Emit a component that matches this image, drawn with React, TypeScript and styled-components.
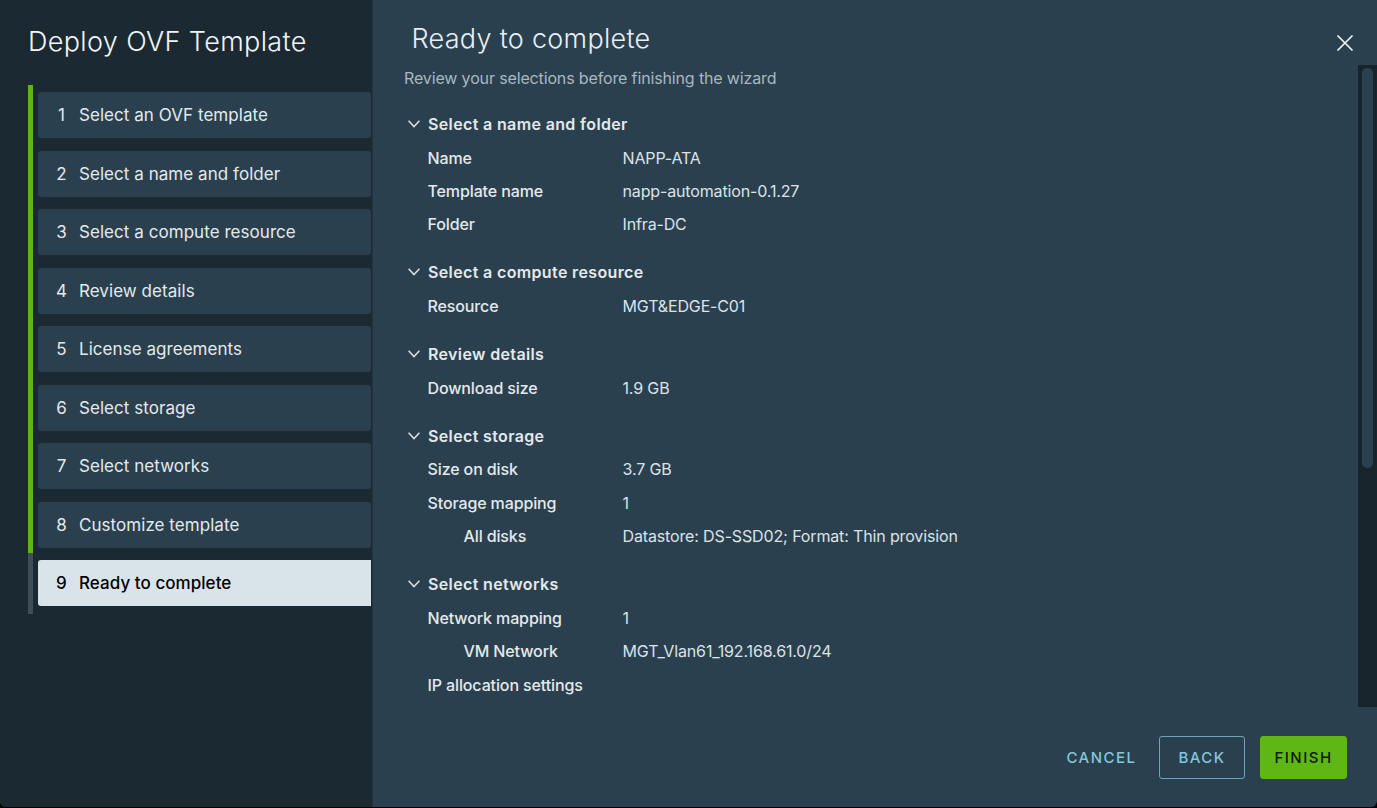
import React from "react";
import styled, { createGlobalStyle } from "styled-components";

const Global = createGlobalStyle`
  html, body { margin: 0; padding: 0; background: #000; }
  body { font-family: Inter, "Liberation Sans", sans-serif; -webkit-font-smoothing: antialiased; }
  #root { width: 1377px; height: 808px; overflow: hidden; }
`;

const Dialog = styled.div`
  width: 1377px;
  height: 807px;
  display: flex;
  background: #2a404f;
  border-radius: 0 0 6px 6px;
  overflow: hidden;
`;

const Sidebar = styled.aside`
  width: 373px;
  flex: none;
  box-sizing: border-box;
  background: #1b2a32;
  border-right: 1px solid #22343f;
  padding: 25px 1px 0 28px;
`;

const Title = styled.h1`
  margin: 0 0 33px 0;
  font-size: 27px;
  line-height: 34px;
  font-weight: 300;
  color: #f2f5f7;
  letter-spacing: 0.35px;
`;

const Steps = styled.ol`
  list-style: none;
  margin: 0;
  padding: 0 0 7.5px 0;
  display: flex;
  flex-direction: column;
  gap: 12.5px;
`;

const Step = styled.li<{ $active?: boolean }>`
  position: relative;
  margin-left: 10px;
  height: 46px;
  display: flex;
  align-items: center;
  border-radius: 3px 0 0 3px;
  border-top-right-radius: ${(p) => (p.$active ? "0" : "3px")};
  border-bottom-right-radius: ${(p) => (p.$active ? "0" : "3px")};
  background: ${(p) => (p.$active ? "#d9e4ea" : "#2a404f")};
  color: ${(p) => (p.$active ? "#000" : "#e4e9ec")};
  font-size: 17px;
  letter-spacing: 0.05px;
  font-weight: ${(p) => (p.$active ? 500 : 400)};
  &::before {
    content: "";
    position: absolute;
    left: -10px;
    top: -7px;
    bottom: ${(p) => (p.$active ? "-8px" : "-5.5px")};
    width: 5px;
    background: ${(p) => (p.$active ? "#3f4e57" : "#5eb715")};
  }
`;

const StepNumber = styled.span`
  width: 41px;
  flex: none;
  padding-left: 6px;
  box-sizing: border-box;
  text-align: center;
`;

const Main = styled.main`
  flex: 1;
  min-width: 0;
  display: flex;
  flex-direction: column;
`;

const Header = styled.header`
  height: 65px;
  flex: none;
  display: flex;
  align-items: flex-start;
  justify-content: space-between;
  padding: 21px 22px 0 38.5px;
  box-sizing: border-box;
`;

const Heading = styled.h2`
  margin: 0;
  font-size: 27px;
  line-height: 36px;
  font-weight: 300;
  letter-spacing: 0.28px;
  color: #e9eef1;
`;

const Close = styled.button`
  border: 0;
  background: none;
  padding: 0;
  margin-top: 12px;
  width: 20px;
  height: 20px;
  display: block;
  color: #f0f4f6;
`;

const Middle = styled.div`
  flex: 1;
  min-height: 0;
  display: flex;
`;

const Content = styled.div`
  flex: 1;
  min-width: 0;
  padding: 0 0 0 31px;
`;

const Lead = styled.p`
  margin: 0 0 23px;
  font-size: 16px;
  line-height: 26px;
  letter-spacing: -0.14px;
  color: #a9b8c0;
`;

const Section = styled.section`
  margin-bottom: 21.25px;
`;

const SectionHead = styled.div`
  display: flex;
  align-items: center;
  height: 20px;
  margin-bottom: 7px;
  font-size: 16px;
  font-weight: 600;
  color: #e4e9ec;
  letter-spacing: 0.36px;
`;

const Chevron = styled.svg`
  width: 12px;
  height: 8px;
  margin: 0 8px 0 4px;
  flex: none;
  color: #d5dde2;
`;

const Row = styled.div`
  display: flex;
  height: 33.4px;
  align-items: center;
  font-size: 16px;
  padding-left: 23.5px;
  color: #e4e9ec;
`;

const Label = styled.span<{ $indent?: boolean }>`
  width: 195px;
  flex: none;
  box-sizing: border-box;
  padding-left: ${(p) => (p.$indent ? "36px" : "0")};
  font-weight: 500;
  letter-spacing: -0.12px;
`;

const Value = styled.span`
  color: #dce3e7;
  letter-spacing: -0.14px;
`;

const Track = styled.div`
  width: 19px;
  flex: none;
  height: 642px;
  background: #17242c;
  padding: 3px 4px 0 4px;
  box-sizing: border-box;
`;

const Thumb = styled.div`
  height: 400px;
  border-radius: 5px;
  background: #2a404f;
`;

const Footer = styled.footer`
  height: 100px;
  flex: none;
  display: flex;
  justify-content: flex-end;
  align-items: flex-start;
  padding: 29px 30px 0 0;
  box-sizing: border-box;
  gap: 15px;
`;

const Button = styled.button<{ $kind: "link" | "outline" | "solid" }>`
  height: 43px;
  box-sizing: border-box;
  border-radius: 3px;
  font-family: inherit;
  font-size: 15px;
  font-weight: 500;
  letter-spacing: 1.5px;
  padding: 0;
  width: ${(p) => (p.$kind === "link" ? "79px" : p.$kind === "outline" ? "86px" : "87px")};
  margin-right: ${(p) => (p.$kind === "link" ? "3px" : "0")};
  color: ${(p) => (p.$kind === "solid" ? "#0d1a0a" : "#84c8de")};
  background: ${(p) => (p.$kind === "solid" ? "#5eb715" : "transparent")};
  border: ${(p) =>
    p.$kind === "outline" ? "1.5px solid #6ba6bc" : p.$kind === "solid" ? "1px solid #5eb715" : "0"};
`;

const steps = [
  "Select an OVF template",
  "Select a name and folder",
  "Select a compute resource",
  "Review details",
  "License agreements",
  "Select storage",
  "Select networks",
  "Customize template",
  "Ready to complete",
];

const sections: { title: string; rows: [string, string, boolean?][] }[] = [
  {
    title: "Select a name and folder",
    rows: [
      ["Name", "NAPP-ATA"],
      ["Template name", "napp-automation-0.1.27"],
      ["Folder", "Infra-DC"],
    ],
  },
  { title: "Select a compute resource", rows: [["Resource", "MGT&EDGE-C01"]] },
  { title: "Review details", rows: [["Download size", "1.9 GB"]] },
  {
    title: "Select storage",
    rows: [
      ["Size on disk", "3.7 GB"],
      ["Storage mapping", "1"],
      ["All disks", "Datastore: DS-SSD02; Format: Thin provision", true],
    ],
  },
  {
    title: "Select networks",
    rows: [
      ["Network mapping", "1"],
      ["VM Network", "MGT_Vlan61_192.168.61.0/24", true],
      ["IP allocation settings", ""],
    ],
  },
];

export default function App() {
  return (
    <Dialog>
      <Global />
      <Sidebar>
        <Title>Deploy OVF Template</Title>
        <Steps>
          {steps.map((s, i) => (
            <Step key={s} $active={i === 8}>
              <StepNumber>{i + 1}</StepNumber>
              {s}
            </Step>
          ))}
        </Steps>
      </Sidebar>
      <Main>
        <Header>
          <Heading>Ready to complete</Heading>
          <Close aria-label="Close">
            <svg viewBox="0 0 20 20" width="20" height="20" fill="none" stroke="currentColor" strokeWidth="1.7">
              <path d="M2.5 2.5 L17.5 17.5 M17.5 2.5 L2.5 17.5" />
            </svg>
          </Close>
        </Header>
        <Middle>
          <Content>
            <Lead>Review your selections before finishing the wizard</Lead>
            {sections.map((sec) => (
              <Section key={sec.title}>
                <SectionHead>
                  <Chevron viewBox="0 0 12 8" fill="none" stroke="currentColor" strokeWidth="1.6">
                    <path d="M0.6 0.8 L6 6.6 L11.4 0.8" />
                  </Chevron>
                  {sec.title}
                </SectionHead>
                {sec.rows.map(([l, v, indent]) => (
                  <Row key={l}>
                    <Label $indent={indent}>{l}</Label>
                    <Value>{v}</Value>
                  </Row>
                ))}
              </Section>
            ))}
          </Content>
          <Track>
            <Thumb />
          </Track>
        </Middle>
        <Footer>
          <Button $kind="link">CANCEL</Button>
          <Button $kind="outline">BACK</Button>
          <Button $kind="solid">FINISH</Button>
        </Footer>
      </Main>
    </Dialog>
  );
}
